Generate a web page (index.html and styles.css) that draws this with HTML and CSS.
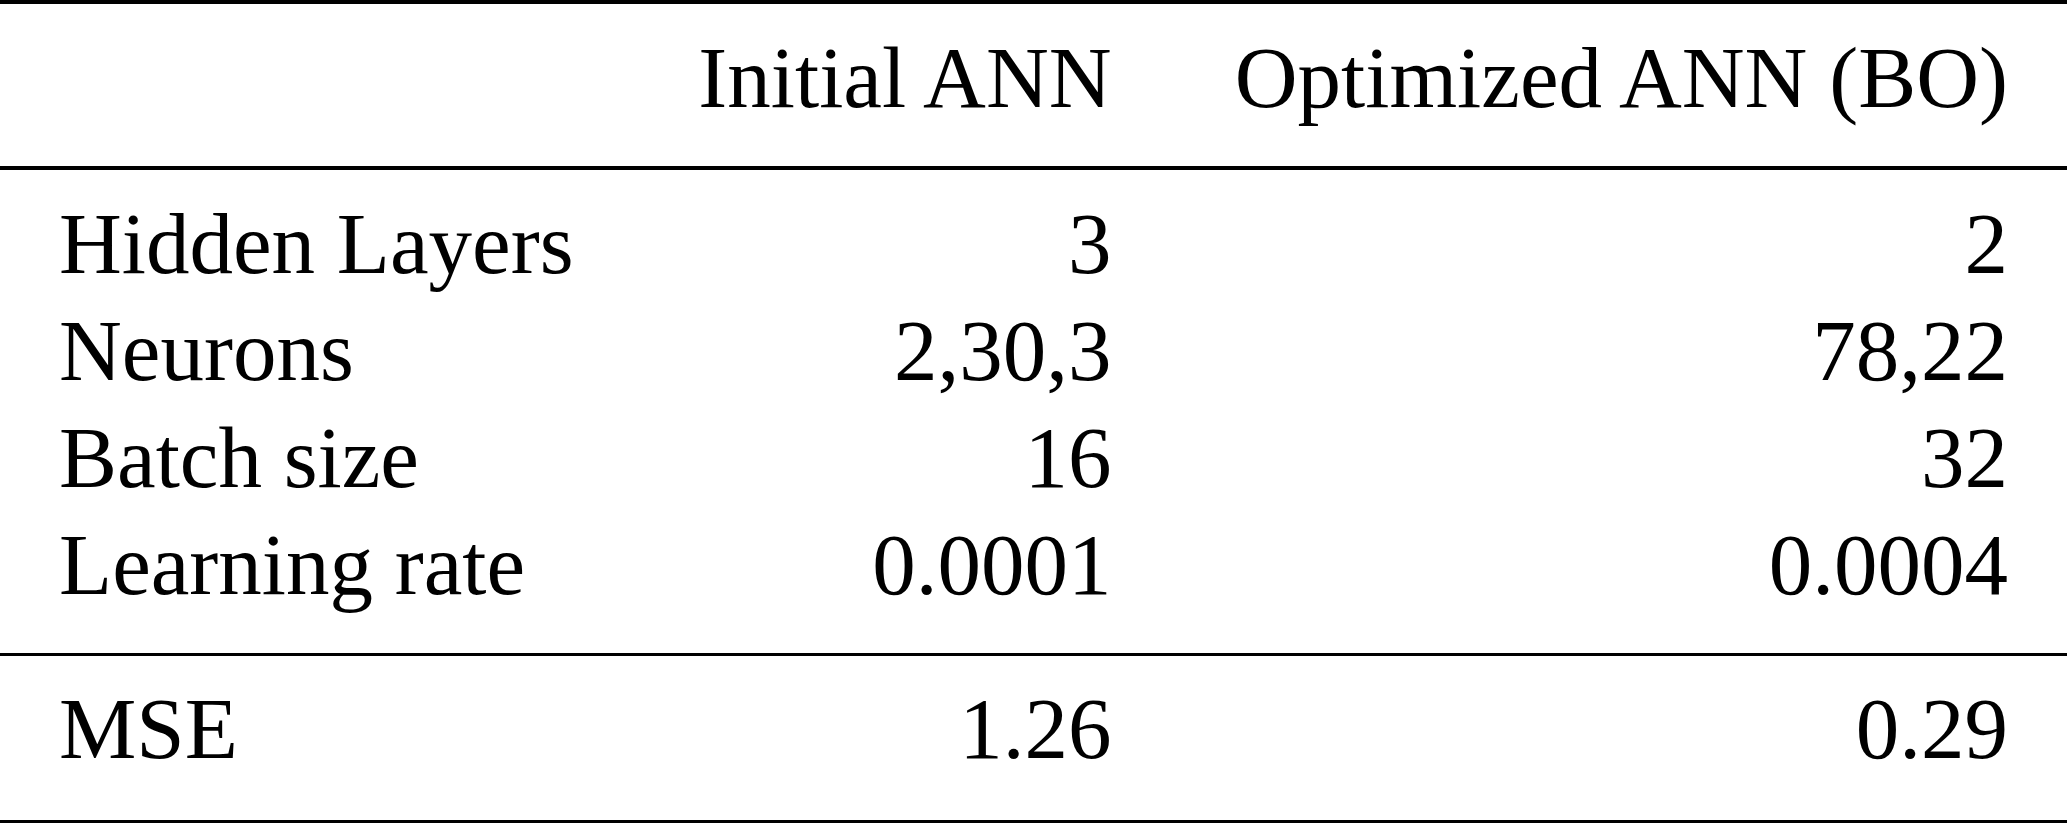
FILE: index.html
```html
<!DOCTYPE html>
<html lang="en">
<head>
<meta charset="utf-8">
<title>ANN comparison</title>
<link rel="stylesheet" href="styles.css">
</head>
<body>
<table class="results">
  <thead>
    <tr>
      <th class="label"></th>
      <th class="num">Initial ANN</th>
      <th class="num">Optimized ANN (BO)</th>
    </tr>
  </thead>
  <tbody class="params">
    <tr class="first">
      <td class="label">Hidden Layers</td>
      <td class="num">3</td>
      <td class="num">2</td>
    </tr>
    <tr>
      <td class="label">Neurons</td>
      <td class="num">2,30,3</td>
      <td class="num">78,22</td>
    </tr>
    <tr>
      <td class="label">Batch size</td>
      <td class="num">16</td>
      <td class="num">32</td>
    </tr>
    <tr class="last">
      <td class="label">Learning rate</td>
      <td class="num">0.0001</td>
      <td class="num">0.0004</td>
    </tr>
  </tbody>
  <tbody class="metric">
    <tr>
      <td class="label">MSE</td>
      <td class="num">1.26</td>
      <td class="num">0.29</td>
    </tr>
  </tbody>
</table>
</body>
</html>
```
FILE: styles.css
```css
html, body {
  margin: 0;
  padding: 0;
  background: #ffffff;
}

body {
  font-family: "Liberation Serif", "Times New Roman", serif;
  color: #000000;
  overflow: hidden;
}

.results {
  width: 100%;
  border-collapse: separate;
  border-spacing: 0;
  font-size: 87px;
  line-height: 107px;
}

.results th,
.results td {
  padding: 0 59px;
  font-weight: normal;
  white-space: nowrap;
}

.results .label {
  text-align: left;
}

.results .num {
  text-align: right;
}

.results thead th {
  border-top: 4px solid #000;
  border-bottom: 4px solid #000;
  padding-top: 20px;
  padding-bottom: 35px;
}

.params .first td {
  padding-top: 20px;
}

.params .last td {
  padding-bottom: 35px;
  border-bottom: 3px solid #000;
}

.metric td {
  padding-top: 19px;
  padding-bottom: 38px;
  border-bottom: 3px solid #000;
}
```
